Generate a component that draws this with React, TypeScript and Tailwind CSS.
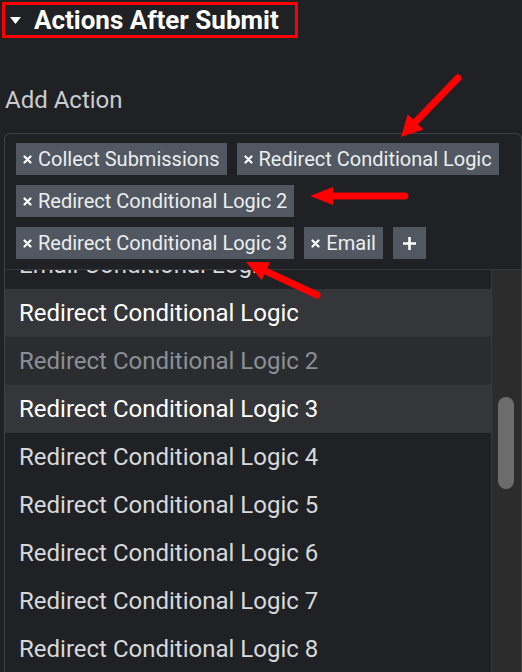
import React from 'react';

const tags = [
  'Collect Submissions',
  'Redirect Conditional Logic',
  'Redirect Conditional Logic 2',
  'Redirect Conditional Logic 3',
  'Email',
];

const options: { label: string; tone: 'normal' | 'hover' | 'muted' }[] = [
  { label: 'Email Conditional Logic', tone: 'normal' },
  { label: 'Redirect Conditional Logic', tone: 'hover' },
  { label: 'Redirect Conditional Logic 2', tone: 'muted' },
  { label: 'Redirect Conditional Logic 3', tone: 'hover' },
  { label: 'Redirect Conditional Logic 4', tone: 'normal' },
  { label: 'Redirect Conditional Logic 5', tone: 'normal' },
  { label: 'Redirect Conditional Logic 6', tone: 'normal' },
  { label: 'Redirect Conditional Logic 7', tone: 'normal' },
  { label: 'Redirect Conditional Logic 8', tone: 'normal' },
];

const CloseIcon = () => (
  <svg width="9" height="9" viewBox="0 0 9 9" className="shrink-0">
    <path d="M1.5 1.5 L7.5 7.5 M7.5 1.5 L1.5 7.5" stroke="#ffffff" strokeWidth="2.2" strokeLinecap="round" />
  </svg>
);

const Tag = ({ label }: { label: string }) => (
  <div className="flex items-center h-[32px] pl-[7px] pr-[7px] gap-[6px] bg-[#525861] text-[20px] text-[#eceef0] leading-none">
    <CloseIcon />
    <span>{label}</span>
  </div>
);

// red call-out arrows drawn over the panel
const Arrow = ({ x1, y1, x2, y2, len, half }: { x1: number; y1: number; x2: number; y2: number; len: number; half: number }) => {
  const dx = x2 - x1;
  const dy = y2 - y1;
  const d = Math.hypot(dx, dy);
  const ux = dx / d;
  const uy = dy / d;
  const bx = x2 - ux * len;
  const by = y2 - uy * len;
  const px = -uy;
  const py = ux;
  return (
    <g>
      <line x1={x1} y1={y1} x2={bx + ux * 2} y2={by + uy * 2} stroke="#ff0000" strokeWidth="7" strokeLinecap="round" />
      <polygon
        points={`${x2},${y2} ${bx + px * half},${by + py * half} ${bx - px * half},${by - py * half}`}
        fill="#ff0000"
      />
    </g>
  );
};

export default function App() {
  return (
    <div className="relative w-[522px] h-[672px] overflow-hidden bg-[#1f2124] font-['Roboto',sans-serif]">
      <div className="pl-[2px] pt-[2px]">
        <div className="flex items-center w-[296px] h-[36px] border-[3px] border-[#ff0000] pl-[5px] gap-[13px]">
          <svg width="11" height="7" viewBox="0 0 11 7">
            <path d="M0 0 L11 0 L5.5 7 Z" fill="#ffffff" />
          </svg>
          <span className="text-[26px] font-bold text-white leading-none">Actions After Submit</span>
        </div>
      </div>

      <div className="mt-[50px] pl-[5px] text-[24px] leading-[24px] text-[#c9ccd0]">Add Action</div>

      <div className="mt-[21px] ml-[4px] w-[518px] border-l border-t border-[#3e4146] rounded-tl-[6px] rounded-tr-[6px] border-r">
        <div className="flex flex-wrap gap-[10px] pl-[11px] pr-[8px] pt-[9px] pb-[10px] border-b border-[#34373c]">
          {tags.map((t) => (
            <Tag key={t} label={t} />
          ))}
          <div className="flex items-center justify-center w-[33px] h-[32px] bg-[#525861]">
            <svg width="15" height="15" viewBox="0 0 15 15">
              <path d="M7.5 1 V14 M1 7.5 H14" stroke="#ffffff" strokeWidth="2.6" />
            </svg>
          </div>
        </div>

        <div className="flex h-[402px]">
          <div className="w-[487px] overflow-hidden border-r border-[#3a3a3a]">
            <div className="-mt-[29px]">
              {options.map((o) => (
                <div
                  key={o.label}
                  className={`flex items-center h-[48px] pl-[14px] text-[24px] leading-none ${
                    o.tone === 'hover'
                      ? 'bg-[#34363a] text-white'
                      : o.tone === 'muted'
                      ? 'bg-[#2a2c30] text-[#8b9096]'
                      : 'text-[#d6d9dc]'
                  }`}
                >
                  {o.label}
                </div>
              ))}
            </div>
          </div>
          <div className="flex-1 bg-[#2c2c2c] pt-[127px] pl-[6px] pr-[4px]">
            <div className="h-[92px] w-[16px] rounded-full bg-[#6c6c6c]" />
          </div>
        </div>
      </div>

      <svg className="absolute inset-0 pointer-events-none" width="522" height="672">
        <Arrow x1={458} y1={78} x2={401} y2={137} len={21} half={11} />
        <Arrow x1={405} y1={196} x2={310} y2={196} len={23} half={9} />
        <Arrow x1={317} y1={295} x2={246} y2={262} len={22} half={10} />
      </svg>
    </div>
  );
}
